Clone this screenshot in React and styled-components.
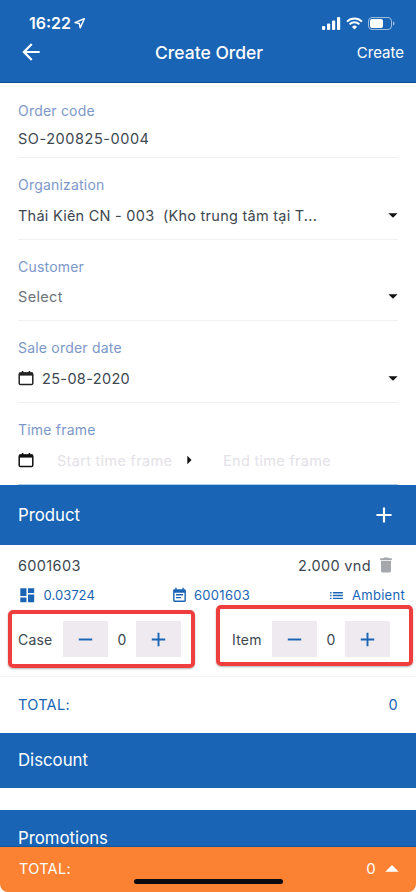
import React from 'react'
import styled, { createGlobalStyle } from 'styled-components'
import {
  MdArrowBack,
  MdAdd,
  MdRemove,
  MdDelete,
  MdDashboard,
  MdEventNote,
  MdList,
  MdArrowDropDown,
  MdArrowDropUp,
  MdArrowRight,
} from 'react-icons/md'

const blue = '#1964b5'

const GlobalStyle = createGlobalStyle`
  html, body { margin: 0; padding: 0; background: #fff; }
  * { box-sizing: border-box; }
`

const Screen = styled.div`
  position: relative;
  width: 416px;
  height: 892px;
  overflow: hidden;
  background: #fff;
  font-family: Inter, Roboto, "Liberation Sans", sans-serif;
  color: #3d4750;
`

const Header = styled.header`
  height: 83px;
  background: ${blue};
  color: #fff;
  border-bottom: 1px solid #114f94;
  padding: 14px 12px 0 22px;
`

const StatusBar = styled.div`
  display: flex;
  align-items: center;
  justify-content: space-between;
  height: 18px;
  padding: 0 9px 0 7px;
`

const Clock = styled.div`
  display: flex;
  align-items: center;
  gap: 3px;
  font-size: 16px;
  font-weight: 600;
`

const StatusIcons = styled.div`
  display: flex;
  align-items: center;
  gap: 5px;
`

const NavBar = styled.div`
  display: grid;
  grid-template-columns: 133px auto 1fr;
  align-items: center;
  height: 24px;
  margin-top: 7px;
`

const BackButton = styled.div`
  display: flex;
  margin-left: -4px;
  font-size: 26px;
`

const Title = styled.div`
  font-size: 17.5px;
  font-weight: 500;
`

const NavAction = styled.div`
  justify-self: end;
  font-size: 15px;
`

const Form = styled.section`
  padding: 0 18px;
`

const Field = styled.div`
  height: ${p => p.$height}px;
  padding-top: ${p => p.$top || 18}px;
  border-bottom: 1px solid ${p => (p.$last ? '#a9cdec' : '#f1f1f3')};
`

const Label = styled.div`
  font-size: 14px;
  line-height: 18px;
  letter-spacing: 0.2px;
  color: #7c98ca;
`

const ValueRow = styled.div`
  display: flex;
  align-items: center;
  height: 20px;
  margin-top: ${p => p.$gap}px;
  font-size: 14.5px;
  letter-spacing: ${p => p.$spacing ?? 0.35}px;
  color: ${p => (p.$muted ? '#6b7379' : '#3d4750')};
`

const ValueText = styled.span`
  flex: 1;
  white-space: pre;
`

const Caret = styled(MdArrowDropDown)`
  font-size: 22px;
  margin-right: -6px;
  color: #111;
`

const DateIcon = styled.svg`
  width: 16px;
  height: 16px;
  margin-right: ${p => p.$space}px;
  flex: none;
`

const Placeholder = styled.span`
  width: ${p => p.$width}px;
  font-size: 14.5px;
  letter-spacing: 0.3px;
  color: #e4e1e7;
`

const RangeArrow = styled(MdArrowRight)`
  font-size: 20px;
  margin: 0 24px 0 -10px;
  color: #111;
`

const SectionBar = styled.div`
  display: flex;
  align-items: ${p => (p.$clipped ? 'flex-start' : 'center')};
  justify-content: space-between;
  height: ${p => p.$height}px;
  padding: ${p => p.$top}px 22px ${p => p.$bottom || 0}px 18px;
  background: ${blue};
  color: #fff;
  font-size: 16.8px;
  font-weight: 400;
  line-height: 20px;
`

const PlusIcon = styled(MdAdd)`
  font-size: 26px;
  margin-right: -3px;
`

const Product = styled.section`
  height: 132px;
  padding: 10px 11px 0 18px;
  border-bottom: 1px solid #f1f1f3;
`

const ProductHead = styled.div`
  display: flex;
  align-items: center;
  justify-content: space-between;
  height: 20px;
  font-size: 14.5px;
  letter-spacing: 0.35px;
`

const Price = styled.div`
  display: flex;
  align-items: center;
  gap: 5px;
  margin-right: 9px;
`

const Trash = styled(MdDelete)`
  font-size: 20px;
  color: #a4a8ac;
`

const MetaRow = styled.div`
  display: grid;
  grid-template-columns: 153px 1fr auto;
  height: 18px;
  margin-top: 11px;
`

const Meta = styled.div`
  display: flex;
  align-items: center;
  gap: ${p => p.$gap}px;
  font-size: 13px;
  letter-spacing: ${p => p.$spacing || 0.3}px;
  color: ${blue};

  svg {
    font-size: ${p => p.$icon || 17}px;
    flex: none;
  }
`

const Steppers = styled.div`
  display: flex;
  margin-top: 17px;
`

const Stepper = styled.div`
  display: flex;
  align-items: center;
  width: ${p => p.$width}px;
`

const StepLabel = styled.span`
  width: ${p => p.$width}px;
  font-size: 14px;
  letter-spacing: 0.2px;
`

const StepButton = styled.div`
  display: flex;
  align-items: center;
  justify-content: center;
  width: 45px;
  height: 36px;
  background: #eeeaef;
  color: ${blue};
  font-size: 23px;
`

const StepCount = styled.span`
  width: 28px;
  text-align: center;
  font-size: 14px;
`

const Highlight = styled.div`
  position: absolute;
  left: ${p => p.$left}px;
  top: ${p => p.$top}px;
  width: ${p => p.$width}px;
  height: ${p => p.$height}px;
  border: 4px solid #ef3e3e;
  border-radius: 5px;
  box-shadow: 0 1px 2px rgba(0, 0, 0, 0.3);
`

const TotalRow = styled.div`
  display: flex;
  align-items: center;
  justify-content: space-between;
  height: 56px;
  padding: 0 18px 2px;
  font-size: 14.5px;
  letter-spacing: 0.3px;
  color: ${blue};
`

const Gap = styled.div`
  height: 22px;
  background: #fff;
`

const Footer = styled.footer`
  position: absolute;
  left: 0;
  right: 0;
  bottom: 0;
  height: 46px;
  padding: 12px 12px 0 19px;
  background: #fb8232;
  border-top: 1px solid #145599;
  border-radius: 0 0 8px 8px;
  color: #fff;
  display: flex;
  align-items: flex-start;
  justify-content: space-between;
  font-size: 14.5px;
  line-height: 20px;
  letter-spacing: 0.3px;
`

const FooterValue = styled.div`
  display: flex;
  align-items: center;
  font-size: 15px;

  svg {
    font-size: 32px;
    margin: -6px -4px -6px 0;
  }
`

const HomeBar = styled.div`
  position: absolute;
  left: 134px;
  bottom: 8px;
  width: 149px;
  height: 5px;
  border-radius: 3px;
  background: #0b0b12;
`

function Calendar({ color, space }) {
  return (
    <DateIcon viewBox="0 0 16 16" $space={space}>
      <rect x="1.2" y="3" width="13.6" height="11.6" rx="1.4" fill="none" stroke={color} strokeWidth="1.5" />
      <rect x="1.2" y="2.6" width="13.6" height="3" fill={color} />
      <rect x="3.8" y="1" width="1.6" height="2" fill={color} />
      <rect x="10.6" y="1" width="1.6" height="2" fill={color} />
    </DateIcon>
  )
}

function QtyStepper({ label, labelWidth, width }) {
  return (
    <Stepper $width={width}>
      <StepLabel $width={labelWidth}>{label}</StepLabel>
      <StepButton><MdRemove /></StepButton>
      <StepCount>0</StepCount>
      <StepButton><MdAdd /></StepButton>
    </Stepper>
  )
}

export default function App() {
  return (
    <Screen>
      <GlobalStyle />
      <Header>
        <StatusBar>
          <Clock>
            16:22
            <svg width="11" height="11" viewBox="0 0 11 11">
              <path d="M10.5.5 1 4.6l4.3.9.9 4.4z" fill="none" stroke="#fff" strokeWidth="1.4" strokeLinejoin="round" />
            </svg>
          </Clock>
          <StatusIcons>
            <svg width="19" height="13" viewBox="0 0 19 13" fill="#fff">
              <rect x="0" y="9" width="3.2" height="4" rx="1" />
              <rect x="5" y="6.5" width="3.2" height="6.5" rx="1" />
              <rect x="10" y="3.5" width="3.2" height="9.5" rx="1" />
              <rect x="15" y="0" width="3.2" height="13" rx="1" />
            </svg>
            <svg width="17" height="13" viewBox="0 0 17 13" fill="none" stroke="#fff" strokeWidth="2">
              <path d="M1 4.6a10.6 10.6 0 0 1 15 0" />
              <path d="M3.6 7.4a6.9 6.9 0 0 1 9.8 0" />
              <path d="M8.5 12.6 6 9.9a3.5 3.5 0 0 1 5 0z" fill="#fff" stroke="none" />
            </svg>
            <svg width="27" height="13" viewBox="0 0 27 13">
              <rect x=".5" y=".5" width="23" height="12" rx="3.5" fill="none" stroke="#9dbde0" />
              <rect x="2" y="2" width="13" height="9" rx="2" fill="#fff" />
              <path d="M25 4.5c1 .3 1.5 1 1.5 2s-.5 1.7-1.5 2z" fill="#9dbde0" />
            </svg>
          </StatusIcons>
        </StatusBar>
        <NavBar>
          <BackButton><MdArrowBack /></BackButton>
          <Title>Create Order</Title>
          <NavAction>Create</NavAction>
        </NavBar>
      </Header>

      <Form>
        <Field $height={75} $top={19}>
          <Label>Order code</Label>
          <ValueRow $gap={8} $spacing={0.55}><ValueText>SO-200825-0004</ValueText></ValueRow>
        </Field>
        <Field $height={82}>
          <Label>Organization</Label>
          <ValueRow $gap={11} $spacing={0.25}>
            <ValueText>Thái Kiên CN - 003  (Kho trung tâm tại T...</ValueText>
            <Caret />
          </ValueRow>
        </Field>
        <Field $height={81}>
          <Label>Customer</Label>
          <ValueRow $gap={10} $muted>
            <ValueText>Select</ValueText>
            <Caret />
          </ValueRow>
        </Field>
        <Field $height={82}>
          <Label>Sale order date</Label>
          <ValueRow $gap={11}>
            <Calendar color="#222" space={8} />
            <ValueText>25-08-2020</ValueText>
            <Caret />
          </ValueRow>
        </Field>
        <Field $height={82} $last>
          <Label>Time frame</Label>
          <ValueRow $gap={11}>
            <Calendar color="#111" space={23} />
            <Placeholder $width={132}>Start time frame</Placeholder>
            <RangeArrow />
            <Placeholder $width={130}>End time frame</Placeholder>
          </ValueRow>
        </Field>
      </Form>

      <SectionBar $height={60} $top={0}>
        Product
        <PlusIcon />
      </SectionBar>

      <Product>
        <ProductHead>
          6001603
          <Price>2.000 vnd <Trash /></Price>
        </ProductHead>
        <MetaRow>
          <Meta $gap={7} $spacing={0.05} $icon={18.5}><MdDashboard />0.03724</Meta>
          <Meta $gap={6}><MdEventNote />6001603</Meta>
          <Meta $gap={7}><MdList />Ambient</Meta>
        </MetaRow>
        <Steppers>
          <QtyStepper label="Case" labelWidth={45} width={214} />
          <QtyStepper label="Item" labelWidth={40} width={160} />
        </Steppers>
      </Product>

      <TotalRow>
        <span>TOTAL:</span>
        <span>0</span>
      </TotalRow>

      <SectionBar $height={55} $top={0} $bottom={2}>Discount</SectionBar>
      <Gap />
      <SectionBar $height={60} $top={18} $clipped>Promotions</SectionBar>

      <Highlight $left={8} $top={610} $width={187} $height={58} />
      <Highlight $left={216} $top={605} $width={197} $height={61} />

      <Footer>
        <span>TOTAL:</span>
        <FooterValue>0 <MdArrowDropUp /></FooterValue>
      </Footer>
      <HomeBar />
    </Screen>
  )
}
